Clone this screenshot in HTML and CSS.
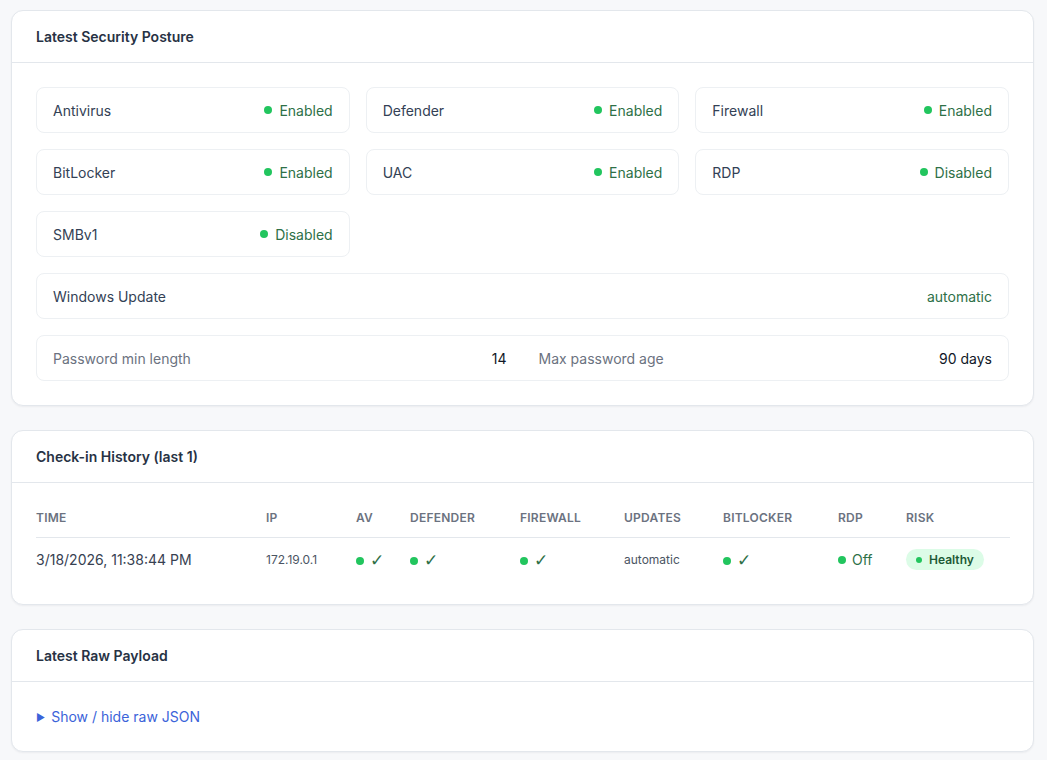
FILE: index.html
```html
<!DOCTYPE html>
<html>
<head>
<meta charset="utf-8">
<link rel="stylesheet" href="styles.css">
</head>
<body>
<div class="page">
  <section class="card">
    <div class="card-head">Latest Security Posture</div>
    <div class="card-body">
      <div class="grid">
        <div class="item"><span class="label">Antivirus</span><span class="status"><i class="dot"></i>Enabled</span></div>
        <div class="item"><span class="label">Defender</span><span class="status"><i class="dot"></i>Enabled</span></div>
        <div class="item"><span class="label">Firewall</span><span class="status"><i class="dot"></i>Enabled</span></div>
        <div class="item"><span class="label">BitLocker</span><span class="status"><i class="dot"></i>Enabled</span></div>
        <div class="item"><span class="label">UAC</span><span class="status"><i class="dot"></i>Enabled</span></div>
        <div class="item"><span class="label">RDP</span><span class="status"><i class="dot"></i>Disabled</span></div>
        <div class="item"><span class="label">SMBv1</span><span class="status"><i class="dot"></i>Disabled</span></div>
      </div>
      <div class="item wide"><span class="label">Windows Update</span><span class="status plain">automatic</span></div>
      <div class="item wide split">
        <div class="half"><span class="muted">Password min length</span><span class="value">14</span></div>
        <div class="half"><span class="muted">Max password age</span><span class="value">90 days</span></div>
      </div>
    </div>
  </section>

  <section class="card">
    <div class="card-head">Check-in History (last 1)</div>
    <div class="card-body">
      <table class="history">
        <colgroup>
          <col class="c-time"><col class="c-ip"><col class="c-av"><col class="c-def"><col class="c-fw"><col class="c-upd"><col class="c-bl"><col class="c-rdp"><col class="c-risk">
        </colgroup>
        <thead>
          <tr><th>Time</th><th>IP</th><th>AV</th><th>Defender</th><th>Firewall</th><th>Updates</th><th>BitLocker</th><th>RDP</th><th>Risk</th></tr>
        </thead>
        <tbody>
          <tr>
            <td class="time">3/18/2026, 11:38:44 PM</td>
            <td class="small">172.19.0.1</td>
            <td><i class="dot"></i><span class="check">✓</span></td>
            <td><i class="dot"></i><span class="check">✓</span></td>
            <td><i class="dot"></i><span class="check">✓</span></td>
            <td class="small">automatic</td>
            <td><i class="dot"></i><span class="check">✓</span></td>
            <td><i class="dot"></i><span class="off">Off</span></td>
            <td><span class="badge"><i class="bdot"></i>Healthy</span></td>
          </tr>
        </tbody>
      </table>
    </div>
  </section>

  <section class="card">
    <div class="card-head">Latest Raw Payload</div>
    <div class="card-body raw-body">
      <details class="raw">
        <summary><span class="tri">▶</span>Show / hide raw JSON</summary>
      </details>
    </div>
  </section>
</div>
</body>
</html>
```

FILE: styles.css
```css
* { box-sizing: border-box; }
html, body { margin: 0; padding: 0; }
body {
  background: #f7f8fa;
  font-family: Inter, "Noto Sans", sans-serif;
  color: #334155;
  font-size: 14px;
}
.page {
  padding: 10px 13px 10px 11px;
  display: flex;
  flex-direction: column;
  gap: 24px;
}
.card {
  background: #fff;
  border: 1px solid #e3e7ec;
  border-radius: 12px;
  box-shadow: 0 1px 2px rgba(15, 23, 42, 0.05);
}
.card-head {
  padding: 16px 24px 15px;
  line-height: 20px;
  font-weight: 600;
  font-size: 14px;
  color: #273244;
  border-bottom: 1px solid #e3e7ec;
}
.card-body {
  padding: 24px;
  display: flex;
  flex-direction: column;
  gap: 16px;
}
.raw-body { padding: 25px 24px 24px; }
.grid {
  display: grid;
  grid-template-columns: repeat(3, 1fr);
  gap: 16px;
}
.item {
  display: flex;
  justify-content: space-between;
  align-items: center;
  height: 46px;
  padding: 0 16px;
  border: 1px solid #edf0f3;
  border-radius: 8px;
  background: #fff;
}
.label { color: #334155; }
.status {
  color: #2e7047;
  display: flex;
  align-items: center;
}
.dot {
  display: inline-block;
  width: 8px;
  height: 8px;
  border-radius: 50%;
  background: #22c55e;
  margin-right: 7px;
}
.split { padding: 0; }
.half {
  flex: 1;
  display: flex;
  justify-content: space-between;
  align-items: center;
  padding: 0 16px;
}
.muted { color: #6b7280; }
.value { color: #111827; }

.history {
  width: 100%;
  border-collapse: collapse;
  table-layout: fixed;
}
.c-time { width: 230px; }
.c-ip { width: 90px; }
.c-av { width: 54px; }
.c-def { width: 110px; }
.c-fw { width: 104px; }
.c-upd { width: 99px; }
.c-bl { width: 115px; }
.c-rdp { width: 68px; }
.c-risk { width: 104px; }
.history th {
  text-align: left;
  font-size: 12px;
  font-weight: 600;
  text-transform: uppercase;
  letter-spacing: 0.02em;
  color: #6b7280;
  padding: 3px 0 11px 0;
  line-height: 16px;
  border-bottom: 1px solid #e3e7ec;
}
.history td {
  padding: 2px 0 0 0;
  height: 42px;
  vertical-align: middle;
  white-space: nowrap;
}
.history .time { font-size: 14px; color: #374151; }
.history .small { font-size: 12px; color: #4b5563; }
.history .dot { margin-right: 6px; vertical-align: 1px; }
.check {
  color: #2e7047;
  font-size: 17px;
  font-family: "DejaVu Sans", sans-serif;
  font-weight: 300;
}
.off { color: #2e7047; font-size: 14px; }
.badge {
  display: inline-flex;
  align-items: center;
  background: #dcfce7;
  color: #1d5a36;
  font-size: 12px;
  font-weight: 600;
  padding: 3px 10px 2px 10px;
  border-radius: 999px;
  line-height: 16px;
}
.bdot {
  display: inline-block;
  width: 6px;
  height: 6px;
  border-radius: 50%;
  background: #22c55e;
  margin-right: 7px;
}
.raw summary {
  list-style: none;
  color: #3b63d9;
  cursor: pointer;
  line-height: 20px;
}
.raw summary::-webkit-details-marker { display: none; }
.tri {
  font-size: 10px;
  margin-right: 6px;
  vertical-align: 1px;
}
```
